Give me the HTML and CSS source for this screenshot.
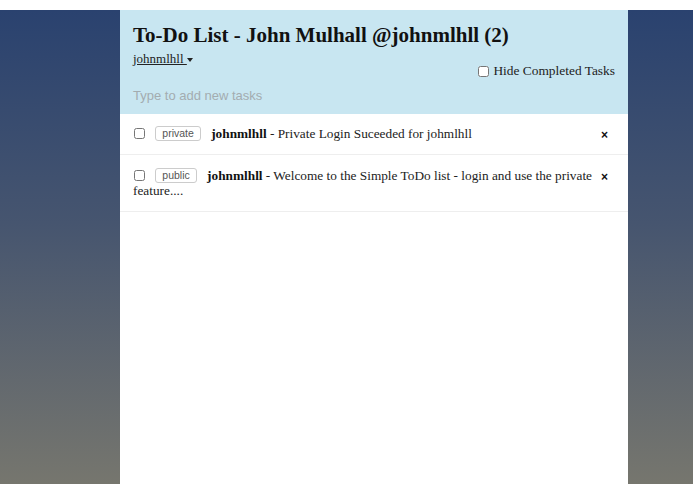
FILE: index.html
```html
<!DOCTYPE html>
<html>
<head>
<meta charset="utf-8">
<link rel="stylesheet" href="styles.css">
</head>
<body>
<div class="page">
  <div class="panel">
    <header class="head">
      <h1 class="title">To-Do List - John Mulhall @johnmlhll (2)</h1>
      <div class="user-row">
        <a class="user">johnmlhll <span class="caret"></span></a>
      </div>
      <label class="hide">
        <input type="checkbox" class="cb"> Hide Completed Tasks
      </label>
      <div class="new-task">Type to add new tasks</div>
    </header>
    <ul class="tasks">
      <li class="task">
        <button class="del">&times;</button>
        <input type="checkbox" class="cb">
        <span class="tag">private</span>
        <strong class="owner">johnmlhll</strong> - Private Login Suceeded for johmlhll
      </li>
      <li class="task">
        <button class="del">&times;</button>
        <input type="checkbox" class="cb">
        <span class="tag">public</span>
        <strong class="owner">johnmlhll</strong> - Welcome to the Simple ToDo list - login and use the private feature....
      </li>
    </ul>
  </div>
</div>
</body>
</html>
```
FILE: styles.css
```css
html, body {
  margin: 0;
  padding: 0;
  background: #fff;
}
.page {
  margin-top: 10px;
  width: 693px;
  height: 474px;
  box-sizing: border-box;
  padding-left: 120px;
  background: linear-gradient(to bottom, #2a426f 0%, #46556f 45%, #76766e 100%);
}
.panel {
  width: 508px;
  height: 100%;
  background: #fff;
  font-family: "Liberation Serif", serif;
  color: #222;
}
.head {
  background: #c8e6f1;
  height: 104px;
  box-sizing: border-box;
  padding: 12px 13px 0 13px;
}
.title {
  margin: 0;
  font-size: 21px;
  line-height: 26px;
  font-weight: bold;
  color: #111;
}
.user-row {
  margin-top: 3px;
  font-size: 13px;
  line-height: 16px;
}
.user {
  color: #222;
  text-decoration: underline;
}
.caret {
  display: inline-block;
  width: 0;
  height: 0;
  border-left: 3px solid transparent;
  border-right: 3px solid transparent;
  border-top: 4px solid #222;
  vertical-align: middle;
}
.hide {
  display: flex;
  justify-content: flex-end;
  align-items: center;
  gap: 4px;
  font-size: 13.4px;
  line-height: 16px;
  margin-top: -4px;
  margin-right: 0;
}
.cb {
  margin: 0;
  width: 11px;
  height: 11px;
}
.new-task {
  margin-top: 9px;
  font-family: "Liberation Sans", sans-serif;
  font-size: 13px;
  color: #a3acb0;
}
.tasks {
  list-style: none;
  margin: 0;
  padding: 0;
}
.task {
  padding: 12px 13px 13px 13px;
  border-bottom: 1px solid #eee;
  font-size: 13.3px;
  line-height: 15px;
}
.task + .task {
  padding-top: 13px;
  padding-bottom: 13px;
}
.task .cb {
  vertical-align: -1px;
  margin-left: 1px;
  margin-right: 7px;
}
.tag {
  display: inline-block;
  font-family: "Liberation Sans", sans-serif;
  font-size: 10.5px;
  line-height: 13px;
  padding: 0 6px;
  border: 1px solid #ccc;
  border-radius: 3px;
  color: #555;
  margin-right: 7px;
  vertical-align: 1px;
}
.owner {
  font-weight: bold;
  color: #111;
}
.del {
  float: right;
  border: none;
  background: none;
  padding: 0;
  margin: 3px 7px 0 4px;
  font-size: 12px;
  font-weight: bold;
  line-height: 12px;
  color: #111;
}
```
